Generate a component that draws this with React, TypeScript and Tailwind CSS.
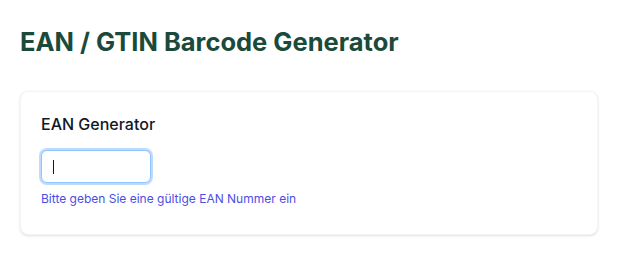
export default function App() {
  return (
    <div className="min-h-screen bg-white px-5 pt-[26px] font-['Inter',sans-serif]">
      <h1 className="mb-[33px] text-[25.5px] leading-8 font-bold text-[#1b4a3a]">EAN / GTIN Barcode Generator</h1>

      <div className="rounded-lg border border-gray-100 bg-white px-5 pt-5 pb-[27px] shadow-sm">
        <h2 className="mb-[14px] text-base font-medium text-gray-900">EAN Generator</h2>
        <div className="flex h-[33px] w-[110px] items-center rounded-md border border-blue-300 bg-white px-[11px] ring-2 ring-blue-200">
          <span className="h-[14px] w-px bg-gray-900" />
        </div>
        <p className="mt-2 text-xs text-[#4b4ee3]">Bitte geben Sie eine gültige EAN Nummer ein</p>
      </div>
    </div>
  );
}
